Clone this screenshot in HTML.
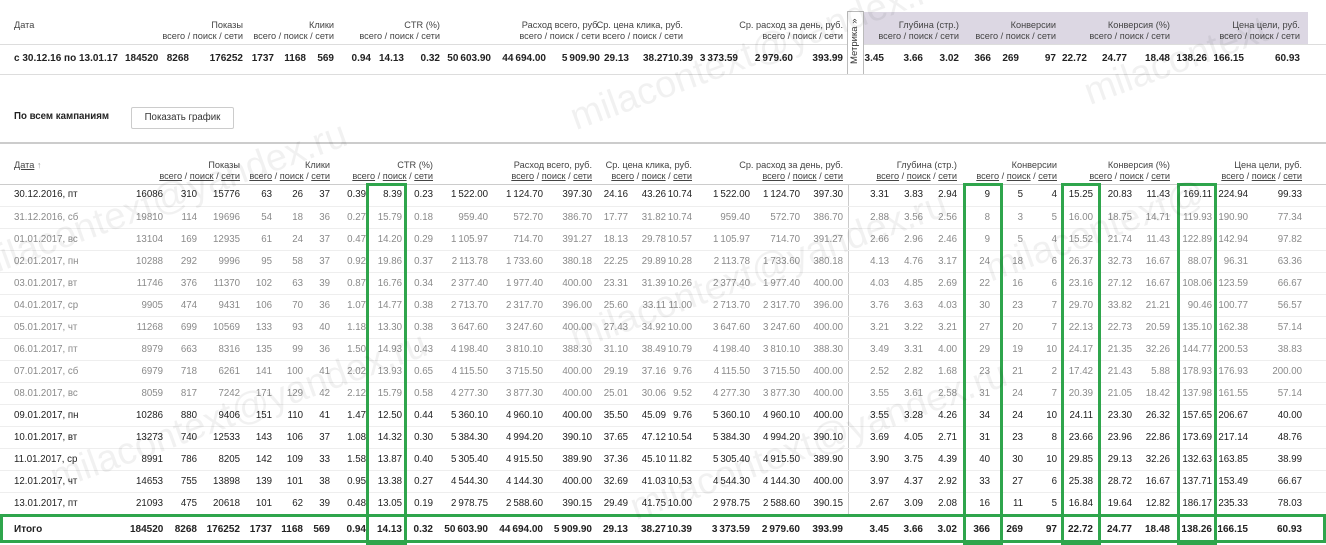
<!DOCTYPE html>
<html><head><meta charset="utf-8"><style>
*{margin:0;padding:0;box-sizing:border-box}
body{width:1326px;height:545px;background:#fff;position:relative;overflow:hidden;font-family:"Liberation Sans","DejaVu Sans",sans-serif;color:#333}
table{position:absolute;left:0;border-collapse:collapse;table-layout:fixed;width:1326px}
td{padding:0;text-align:right;white-space:nowrap;overflow:visible;font-size:9.7px}
td.l{text-align:left;padding-left:14px}
#t1{top:44px}
#t1 tr{height:30px}
#t1 td{font-weight:bold;color:#222;font-size:10px;border-bottom:1px solid #ddd}
#t2{top:184px}
#t2 tr{height:22px}
#t2 td{border-bottom:1px solid #eee;color:#222}
#t2 tr.g td{color:#8a8a8a}
#t2 tr.tot{height:30px}
#t2 tr.tot td{font-weight:bold;font-size:10px;color:#222;border:none}
.h{position:absolute;font-size:9.2px;color:#444;text-align:right;line-height:11px;white-space:nowrap}
.h u{text-decoration:underline}
.gb{position:absolute;border:3px solid #2fa54c}
.wm{position:absolute;font-size:38px;color:rgba(0,0,0,0.055);transform:rotate(-20deg);white-space:nowrap;font-family:"Liberation Sans",sans-serif}
</style></head><body>
<div style="position:absolute;left:863px;top:12px;width:445px;height:32px;background:#dcd7e3"></div>
<div style="position:absolute;left:0;top:44px;width:1326px;border-top:1px solid #ddd"></div>
<div style="position:absolute;left:847px;top:11px;width:17px;height:64px;border:1px solid #bbb;background:#fff"></div>
<div style="position:absolute;left:849px;top:64px;transform:rotate(-90deg);transform-origin:0 0;font-size:9.5px;color:#333;white-space:nowrap">Метрика »</div>

<div class="h" style="left:14px;top:20px;text-align:left">Дата</div>
<div class="h" style="right:1083px;top:20px">Показы<br>всего / поиск / сети</div>
<div class="h" style="right:992px;top:20px">Клики<br>всего / поиск / сети</div>
<div class="h" style="right:886px;top:20px">CTR (%)<br>всего / поиск / сети</div>
<div class="h" style="right:726px;top:20px">Расход всего, руб.<br>всего / поиск / сети</div>
<div class="h" style="right:643px;top:20px">Ср. цена клика, руб.<br>всего / поиск / сети</div>
<div class="h" style="right:483px;top:20px">Ср. расход за день, руб.<br>всего / поиск / сети</div>
<div class="h" style="right:367px;top:20px">Глубина (стр.)<br>всего / поиск / сети</div>
<div class="h" style="right:270px;top:20px">Конверсии<br>всего / поиск / сети</div>
<div class="h" style="right:156px;top:20px">Конверсия (%)<br>всего / поиск / сети</div>
<div class="h" style="right:26px;top:20px">Цена цели, руб.<br>всего / поиск / сети</div>

<table id="t1"><colgroup><col style="width:125px"><col style="width:32px"><col style="width:32px"><col style="width:54px"><col style="width:31px"><col style="width:32px"><col style="width:28px"><col style="width:37px"><col style="width:33px"><col style="width:36px"><col style="width:51px"><col style="width:55px"><col style="width:54px"><col style="width:29px"><col style="width:39px"><col style="width:15px"><col style="width:55px"><col style="width:55px"><col style="width:50px"><col style="width:5px"><col style="width:36px"><col style="width:39px"><col style="width:36px"><col style="width:32px"><col style="width:28px"><col style="width:37px"><col style="width:31px"><col style="width:40px"><col style="width:43px"><col style="width:37px"><col style="width:37px"><col style="width:56px"><col style="width:26px"></colgroup>
<tr><td class="l">с 30.12.16 по 13.01.17</td><td>184520</td><td>8268</td><td>176252</td><td>1737</td><td>1168</td><td>569</td><td>0.94</td><td>14.13</td><td>0.32</td><td>50&#8201;603.90</td><td>44&#8201;694.00</td><td>5&#8201;909.90</td><td>29.13</td><td>38.27</td><td>10.39</td><td>3&#8201;373.59</td><td>2&#8201;979.60</td><td>393.99</td><td></td><td>3.45</td><td>3.66</td><td>3.02</td><td>366</td><td>269</td><td>97</td><td>22.72</td><td>24.77</td><td>18.48</td><td>138.26</td><td>166.15</td><td>60.93</td><td></td></tr>
</table>

<div style="position:absolute;left:14px;top:111px;font-size:9.7px;font-weight:bold;color:#222">По всем кампаниям</div>
<div style="position:absolute;left:131px;top:107px;width:103px;height:22px;border:1px solid #ccc;border-radius:2px;font-size:9.7px;color:#333;text-align:center;line-height:20px">Показать график</div>
<div style="position:absolute;left:0;top:142px;width:1326px;border-top:2px solid #ccc"></div>

<div class="h" style="left:14px;top:160px;text-align:left"><u>Дата</u> <span style="color:#999">↑</span></div>
<div class="h" style="right:1086px;top:160px">Показы<br><u>всего</u> / <u>поиск</u> / <u>сети</u></div>
<div class="h" style="right:996px;top:160px">Клики<br><u>всего</u> / <u>поиск</u> / <u>сети</u></div>
<div class="h" style="right:893px;top:160px">CTR (%)<br><u>всего</u> / <u>поиск</u> / <u>сети</u></div>
<div class="h" style="right:734px;top:160px">Расход всего, руб.<br><u>всего</u> / <u>поиск</u> / <u>сети</u></div>
<div class="h" style="right:634px;top:160px">Ср. цена клика, руб.<br><u>всего</u> / <u>поиск</u> / <u>сети</u></div>
<div class="h" style="right:483px;top:160px">Ср. расход за день, руб.<br><u>всего</u> / <u>поиск</u> / <u>сети</u></div>
<div class="h" style="right:369px;top:160px">Глубина (стр.)<br><u>всего</u> / <u>поиск</u> / <u>сети</u></div>
<div class="h" style="right:269px;top:160px">Конверсии<br><u>всего</u> / <u>поиск</u> / <u>сети</u></div>
<div class="h" style="right:156px;top:160px">Конверсия (%)<br><u>всего</u> / <u>поиск</u> / <u>сети</u></div>
<div class="h" style="right:24px;top:160px">Цена цели, руб.<br><u>всего</u> / <u>поиск</u> / <u>сети</u></div>
<div style="position:absolute;left:0;top:184px;width:1326px;border-top:1px solid #ccc"></div>
<div style="position:absolute;left:848px;top:184px;height:330px;border-left:1px solid #ccc"></div>

<table id="t2"><colgroup><col style="width:130px"><col style="width:33px"><col style="width:34px"><col style="width:43px"><col style="width:32px"><col style="width:31px"><col style="width:27px"><col style="width:36px"><col style="width:36px"><col style="width:31px"><col style="width:55px"><col style="width:55px"><col style="width:49px"><col style="width:36px"><col style="width:38px"><col style="width:26px"><col style="width:58px"><col style="width:50px"><col style="width:43px"><col style="width:5px"><col style="width:41px"><col style="width:34px"><col style="width:34px"><col style="width:33px"><col style="width:33px"><col style="width:34px"><col style="width:36px"><col style="width:39px"><col style="width:38px"><col style="width:42px"><col style="width:36px"><col style="width:54px"><col style="width:24px"></colgroup>
<tr><td class="l">30.12.2016, пт</td><td>16086</td><td>310</td><td>15776</td><td>63</td><td>26</td><td>37</td><td>0.39</td><td>8.39</td><td>0.23</td><td>1&#8201;522.00</td><td>1&#8201;124.70</td><td>397.30</td><td>24.16</td><td>43.26</td><td>10.74</td><td>1&#8201;522.00</td><td>1&#8201;124.70</td><td>397.30</td><td></td><td>3.31</td><td>3.83</td><td>2.94</td><td>9</td><td>5</td><td>4</td><td>15.25</td><td>20.83</td><td>11.43</td><td>169.11</td><td>224.94</td><td>99.33</td><td></td></tr>
<tr class="g"><td class="l">31.12.2016, сб</td><td>19810</td><td>114</td><td>19696</td><td>54</td><td>18</td><td>36</td><td>0.27</td><td>15.79</td><td>0.18</td><td>959.40</td><td>572.70</td><td>386.70</td><td>17.77</td><td>31.82</td><td>10.74</td><td>959.40</td><td>572.70</td><td>386.70</td><td></td><td>2.88</td><td>3.56</td><td>2.56</td><td>8</td><td>3</td><td>5</td><td>16.00</td><td>18.75</td><td>14.71</td><td>119.93</td><td>190.90</td><td>77.34</td><td></td></tr>
<tr class="g"><td class="l">01.01.2017, вс</td><td>13104</td><td>169</td><td>12935</td><td>61</td><td>24</td><td>37</td><td>0.47</td><td>14.20</td><td>0.29</td><td>1&#8201;105.97</td><td>714.70</td><td>391.27</td><td>18.13</td><td>29.78</td><td>10.57</td><td>1&#8201;105.97</td><td>714.70</td><td>391.27</td><td></td><td>2.66</td><td>2.96</td><td>2.46</td><td>9</td><td>5</td><td>4</td><td>15.52</td><td>21.74</td><td>11.43</td><td>122.89</td><td>142.94</td><td>97.82</td><td></td></tr>
<tr class="g"><td class="l">02.01.2017, пн</td><td>10288</td><td>292</td><td>9996</td><td>95</td><td>58</td><td>37</td><td>0.92</td><td>19.86</td><td>0.37</td><td>2&#8201;113.78</td><td>1&#8201;733.60</td><td>380.18</td><td>22.25</td><td>29.89</td><td>10.28</td><td>2&#8201;113.78</td><td>1&#8201;733.60</td><td>380.18</td><td></td><td>4.13</td><td>4.76</td><td>3.17</td><td>24</td><td>18</td><td>6</td><td>26.37</td><td>32.73</td><td>16.67</td><td>88.07</td><td>96.31</td><td>63.36</td><td></td></tr>
<tr class="g"><td class="l">03.01.2017, вт</td><td>11746</td><td>376</td><td>11370</td><td>102</td><td>63</td><td>39</td><td>0.87</td><td>16.76</td><td>0.34</td><td>2&#8201;377.40</td><td>1&#8201;977.40</td><td>400.00</td><td>23.31</td><td>31.39</td><td>10.26</td><td>2&#8201;377.40</td><td>1&#8201;977.40</td><td>400.00</td><td></td><td>4.03</td><td>4.85</td><td>2.69</td><td>22</td><td>16</td><td>6</td><td>23.16</td><td>27.12</td><td>16.67</td><td>108.06</td><td>123.59</td><td>66.67</td><td></td></tr>
<tr class="g"><td class="l">04.01.2017, ср</td><td>9905</td><td>474</td><td>9431</td><td>106</td><td>70</td><td>36</td><td>1.07</td><td>14.77</td><td>0.38</td><td>2&#8201;713.70</td><td>2&#8201;317.70</td><td>396.00</td><td>25.60</td><td>33.11</td><td>11.00</td><td>2&#8201;713.70</td><td>2&#8201;317.70</td><td>396.00</td><td></td><td>3.76</td><td>3.63</td><td>4.03</td><td>30</td><td>23</td><td>7</td><td>29.70</td><td>33.82</td><td>21.21</td><td>90.46</td><td>100.77</td><td>56.57</td><td></td></tr>
<tr class="g"><td class="l">05.01.2017, чт</td><td>11268</td><td>699</td><td>10569</td><td>133</td><td>93</td><td>40</td><td>1.18</td><td>13.30</td><td>0.38</td><td>3&#8201;647.60</td><td>3&#8201;247.60</td><td>400.00</td><td>27.43</td><td>34.92</td><td>10.00</td><td>3&#8201;647.60</td><td>3&#8201;247.60</td><td>400.00</td><td></td><td>3.21</td><td>3.22</td><td>3.21</td><td>27</td><td>20</td><td>7</td><td>22.13</td><td>22.73</td><td>20.59</td><td>135.10</td><td>162.38</td><td>57.14</td><td></td></tr>
<tr class="g"><td class="l">06.01.2017, пт</td><td>8979</td><td>663</td><td>8316</td><td>135</td><td>99</td><td>36</td><td>1.50</td><td>14.93</td><td>0.43</td><td>4&#8201;198.40</td><td>3&#8201;810.10</td><td>388.30</td><td>31.10</td><td>38.49</td><td>10.79</td><td>4&#8201;198.40</td><td>3&#8201;810.10</td><td>388.30</td><td></td><td>3.49</td><td>3.31</td><td>4.00</td><td>29</td><td>19</td><td>10</td><td>24.17</td><td>21.35</td><td>32.26</td><td>144.77</td><td>200.53</td><td>38.83</td><td></td></tr>
<tr class="g"><td class="l">07.01.2017, сб</td><td>6979</td><td>718</td><td>6261</td><td>141</td><td>100</td><td>41</td><td>2.02</td><td>13.93</td><td>0.65</td><td>4&#8201;115.50</td><td>3&#8201;715.50</td><td>400.00</td><td>29.19</td><td>37.16</td><td>9.76</td><td>4&#8201;115.50</td><td>3&#8201;715.50</td><td>400.00</td><td></td><td>2.52</td><td>2.82</td><td>1.68</td><td>23</td><td>21</td><td>2</td><td>17.42</td><td>21.43</td><td>5.88</td><td>178.93</td><td>176.93</td><td>200.00</td><td></td></tr>
<tr class="g"><td class="l">08.01.2017, вс</td><td>8059</td><td>817</td><td>7242</td><td>171</td><td>129</td><td>42</td><td>2.12</td><td>15.79</td><td>0.58</td><td>4&#8201;277.30</td><td>3&#8201;877.30</td><td>400.00</td><td>25.01</td><td>30.06</td><td>9.52</td><td>4&#8201;277.30</td><td>3&#8201;877.30</td><td>400.00</td><td></td><td>3.55</td><td>3.61</td><td>2.58</td><td>31</td><td>24</td><td>7</td><td>20.39</td><td>21.05</td><td>18.42</td><td>137.98</td><td>161.55</td><td>57.14</td><td></td></tr>
<tr><td class="l">09.01.2017, пн</td><td>10286</td><td>880</td><td>9406</td><td>151</td><td>110</td><td>41</td><td>1.47</td><td>12.50</td><td>0.44</td><td>5&#8201;360.10</td><td>4&#8201;960.10</td><td>400.00</td><td>35.50</td><td>45.09</td><td>9.76</td><td>5&#8201;360.10</td><td>4&#8201;960.10</td><td>400.00</td><td></td><td>3.55</td><td>3.28</td><td>4.26</td><td>34</td><td>24</td><td>10</td><td>24.11</td><td>23.30</td><td>26.32</td><td>157.65</td><td>206.67</td><td>40.00</td><td></td></tr>
<tr><td class="l">10.01.2017, вт</td><td>13273</td><td>740</td><td>12533</td><td>143</td><td>106</td><td>37</td><td>1.08</td><td>14.32</td><td>0.30</td><td>5&#8201;384.30</td><td>4&#8201;994.20</td><td>390.10</td><td>37.65</td><td>47.12</td><td>10.54</td><td>5&#8201;384.30</td><td>4&#8201;994.20</td><td>390.10</td><td></td><td>3.69</td><td>4.05</td><td>2.71</td><td>31</td><td>23</td><td>8</td><td>23.66</td><td>23.96</td><td>22.86</td><td>173.69</td><td>217.14</td><td>48.76</td><td></td></tr>
<tr><td class="l">11.01.2017, ср</td><td>8991</td><td>786</td><td>8205</td><td>142</td><td>109</td><td>33</td><td>1.58</td><td>13.87</td><td>0.40</td><td>5&#8201;305.40</td><td>4&#8201;915.50</td><td>389.90</td><td>37.36</td><td>45.10</td><td>11.82</td><td>5&#8201;305.40</td><td>4&#8201;915.50</td><td>389.90</td><td></td><td>3.90</td><td>3.75</td><td>4.39</td><td>40</td><td>30</td><td>10</td><td>29.85</td><td>29.13</td><td>32.26</td><td>132.63</td><td>163.85</td><td>38.99</td><td></td></tr>
<tr><td class="l">12.01.2017, чт</td><td>14653</td><td>755</td><td>13898</td><td>139</td><td>101</td><td>38</td><td>0.95</td><td>13.38</td><td>0.27</td><td>4&#8201;544.30</td><td>4&#8201;144.30</td><td>400.00</td><td>32.69</td><td>41.03</td><td>10.53</td><td>4&#8201;544.30</td><td>4&#8201;144.30</td><td>400.00</td><td></td><td>3.97</td><td>4.37</td><td>2.92</td><td>33</td><td>27</td><td>6</td><td>25.38</td><td>28.72</td><td>16.67</td><td>137.71</td><td>153.49</td><td>66.67</td><td></td></tr>
<tr><td class="l">13.01.2017, пт</td><td>21093</td><td>475</td><td>20618</td><td>101</td><td>62</td><td>39</td><td>0.48</td><td>13.05</td><td>0.19</td><td>2&#8201;978.75</td><td>2&#8201;588.60</td><td>390.15</td><td>29.49</td><td>41.75</td><td>10.00</td><td>2&#8201;978.75</td><td>2&#8201;588.60</td><td>390.15</td><td></td><td>2.67</td><td>3.09</td><td>2.08</td><td>16</td><td>11</td><td>5</td><td>16.84</td><td>19.64</td><td>12.82</td><td>186.17</td><td>235.33</td><td>78.03</td><td></td></tr>
<tr class="tot"><td class="l">Итого</td><td>184520</td><td>8268</td><td>176252</td><td>1737</td><td>1168</td><td>569</td><td>0.94</td><td>14.13</td><td>0.32</td><td>50&#8201;603.90</td><td>44&#8201;694.00</td><td>5&#8201;909.90</td><td>29.13</td><td>38.27</td><td>10.39</td><td>3&#8201;373.59</td><td>2&#8201;979.60</td><td>393.99</td><td></td><td>3.45</td><td>3.66</td><td>3.02</td><td>366</td><td>269</td><td>97</td><td>22.72</td><td>24.77</td><td>18.48</td><td>138.26</td><td>166.15</td><td>60.93</td><td></td></tr>
</table>

<div class="gb" style="left:366px;top:183px;width:41px;height:362px"></div>
<div class="gb" style="left:963px;top:183px;width:40px;height:362px"></div>
<div class="gb" style="left:1061px;top:183px;width:40px;height:362px"></div>
<div class="gb" style="left:1177px;top:183px;width:40px;height:362px"></div>
<div class="gb" style="left:0;top:514px;width:1326px;height:29px"></div>

<div class="wm" style="left:1080px;top:40px">milacontext</div>
<div class="wm" style="left:560px;top:30px">milacontext@yandex.ru</div>
<div class="wm" style="left:-40px;top:180px">milacontext@yandex.ru</div>
<div class="wm" style="left:560px;top:250px">milacontext@yandex.ru</div>
<div class="wm" style="left:980px;top:210px">milacontext@</div>
<div class="wm" style="left:40px;top:390px">milacontext@yandex.ru</div>
<div class="wm" style="left:620px;top:420px">milacontext@yandex.ru</div>
</body></html>
